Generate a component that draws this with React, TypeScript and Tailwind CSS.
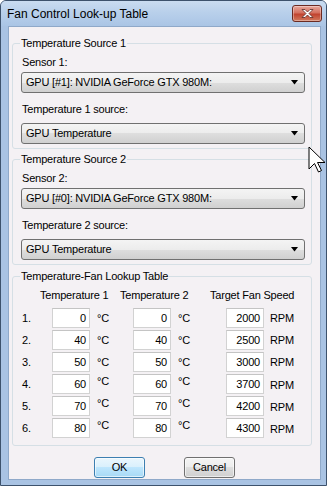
import React from "react";

const comboBg =
  "bg-[linear-gradient(#f4f4f4,#ececec_50%,#dedede_50%,#d0d0d0)]";

const Combo = ({ value, className = "" }: { value: string; className?: string }) => (
  <div
    className={`flex h-[21px] w-[284px] items-center justify-between rounded-[3px] border border-[#707070] ${comboBg} pl-[4px] pr-[5px] ${className}`}
  >
    <span className="leading-[13px]">{value}</span>
    <svg width="8" height="5" viewBox="0 0 8 5">
      <path d="M0 0H7L3.5 4.5Z" fill="#000" />
    </svg>
  </div>
);

const SourceGroup = ({ n, gpu, className = "" }: { n: number; gpu: string; className?: string }) => (
  <fieldset
    className={`ml-[3px] w-[300px] rounded-[3px] border border-[#d5dfe5] pb-[4px] pl-[8px] ${className}`}
  >
    <legend className="-ml-[1px] px-[1px] leading-[13px]">Temperature Source {n}</legend>
    <div className="ml-[1px] mt-[6px] leading-[13px]">Sensor {n}:</div>
    <Combo value={gpu} className="mt-[3px]" />
    <div className="ml-[1px] mt-[10px] leading-[13px]">Temperature {n} source:</div>
    <Combo value="GPU Temperature" className="mt-[7px]" />
  </fieldset>
);

const rows = [
  { t1: 0, t2: 0, fan: 2000 },
  { t1: 40, t2: 40, fan: 2500 },
  { t1: 50, t2: 50, fan: 3000 },
  { t1: 60, t2: 60, fan: 3700 },
  { t1: 70, t2: 70, fan: 4200 },
  { t1: 80, t2: 80, fan: 4300 },
];

const Box = ({ v }: { v: number }) => (
  <div className="flex h-[20px] w-[38px] items-center justify-end border border-[#d2d2d2] border-t-[#c4c4c4] bg-white pr-[3px] leading-[13px]">
    {v}
  </div>
);

export default function App() {
  return (
    <div className="relative flex h-[486px] w-[327px] flex-col rounded-t-[6px] border border-[#3d526c] bg-[#a9c3e3] font-['Liberation_Sans',Arial,sans-serif] text-[11px] tracking-[-0.2px] text-black">
      {/* title bar */}
      <div className="flex h-[25px] items-center justify-between rounded-t-[5px] bg-[linear-gradient(#cadcf0,#b9d0eb_45%,#aac5e5)] pl-[6px] pr-[4px]">
        <span className="text-[12px] tracking-normal">Fan Control Look-up Table</span>
        <div className="flex h-[17px] w-[30px] items-center justify-center rounded-[3px] border border-[#6b2a22] bg-[linear-gradient(#e8a89c,#d4705f_45%,#c1432f_55%,#d27a5e)] shadow-[inset_0_0_0_1px_rgba(255,255,255,0.35)]">
          <svg width="13" height="11" viewBox="0 0 13 11">
            <path
              d="M1 1.5L4 1.5L6.5 4L9 1.5L12 1.5L8 5.5L12 9.5L9 9.5L6.5 7L4 9.5L1 9.5L5 5.5Z"
              fill="#fff"
              stroke="#5a2a24"
              strokeWidth="0.8"
              strokeLinejoin="round"
            />
          </svg>
        </div>
      </div>

      {/* client area */}
      <div className="mb-[5px] ml-[7px] mr-[5px] flex flex-1 flex-col border border-[#8fa9c9] bg-[#f4f1f4]">
        <SourceGroup n={1} gpu="GPU [#1]: NVIDIA GeForce GTX 980M:" className="mt-[10px]" />
        <SourceGroup n={2} gpu="GPU [#0]: NVIDIA GeForce GTX 980M:" className="mt-[4px]" />

        <fieldset className="ml-[3px] mt-[5px] w-[300px] rounded-[3px] border border-[#d5dfe5] pb-[6px] pl-[9px]">
          <legend className="-ml-[2px] px-[1px] leading-[13px]">Temperature-Fan Lookup Table</legend>
          <div className="mt-[6px] flex leading-[13px]">
            <span className="ml-[18px] w-[80px]">Temperature 1</span>
            <span className="w-[90px]">Temperature 2</span>
            <span>Target Fan Speed</span>
          </div>
          <div className="mt-[5px] grid grid-cols-[30px_38px_43px_38px_55px_38px_1fr] auto-rows-[22px] items-center">
            {rows.map((r, i) => (
              <React.Fragment key={i}>
                <span>{i + 1}.</span>
                <Box v={r.t1} />
                <span className={`pl-[7px] ${i > 2 ? "-mt-[5px]" : ""}`}>°C</span>
                <Box v={r.t2} />
                <span className={`pl-[7px] ${i > 2 ? "-mt-[5px]" : ""}`}>°C</span>
                <Box v={r.fan} />
                <span className={`pl-[6px] ${i > 2 ? "mt-[3px]" : ""}`}>RPM</span>
              </React.Fragment>
            ))}
          </div>
        </fieldset>

        <div className="mt-[11px] flex justify-center gap-[39px]">
          <button className="h-[21px] w-[51px] rounded-[3px] border border-[#3c7fb1] bg-[linear-gradient(#eaf6fd,#d9f0fc_50%,#bee6fd_50%,#a7d9f5)] shadow-[inset_0_0_0_1px_rgba(255,255,255,0.6)]">
            OK
          </button>
          <button className={`h-[21px] w-[51px] rounded-[3px] border border-[#707070] ${comboBg} shadow-[inset_0_0_0_1px_rgba(255,255,255,0.6)]`}>
            Cancel
          </button>
        </div>
      </div>

      {/* mouse pointer */}
      <svg
        className="absolute left-[307px] top-[145px]"
        width="18"
        height="28"
        viewBox="0 0 18 28"
      >
        <path
          d="M1 1L1 23L6.5 17.5L10.5 26L13.5 24.5L9.5 16.5L17 16.5Z"
          fill="#fff"
          stroke="#000"
          strokeWidth="1"
          strokeLinejoin="miter"
        />
      </svg>
    </div>
  );
}
